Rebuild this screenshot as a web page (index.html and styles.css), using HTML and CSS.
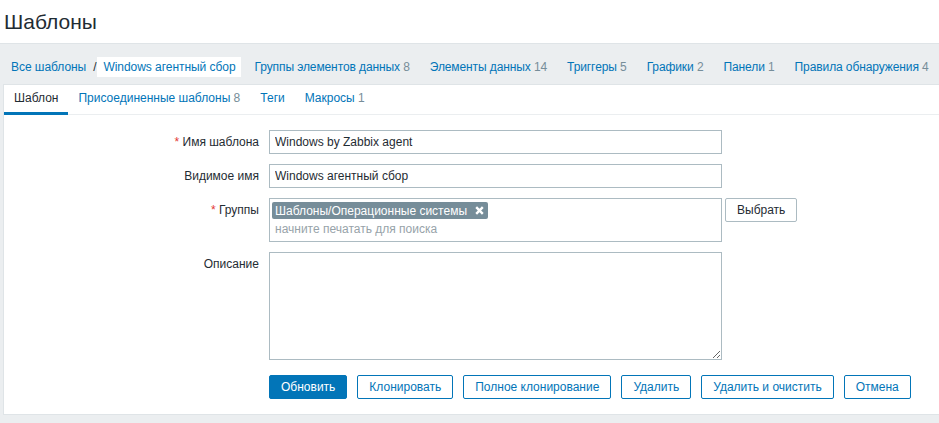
FILE: index.html
```html
<!DOCTYPE html>
<html lang="ru">
<head>
<meta charset="utf-8">
<title>Шаблоны</title>
<link rel="stylesheet" href="styles.css">
</head>
<body>
<header class="page-header">
  <h1>Шаблоны</h1>
</header>
<nav class="object-nav">
  <ul class="breadcrumbs">
    <li><a href="#">Все шаблоны</a></li>
    <li class="sep">/</li>
    <li class="current"><a href="#">Windows агентный сбор</a></li>
  </ul>
  <a class="nav-link" href="#">Группы элементов данных <span class="count">8</span></a>
  <a class="nav-link" href="#">Элементы данных <span class="count">14</span></a>
  <a class="nav-link" href="#">Триггеры <span class="count">5</span></a>
  <a class="nav-link" href="#">Графики <span class="count">2</span></a>
  <a class="nav-link" href="#">Панели <span class="count">1</span></a>
  <a class="nav-link" href="#">Правила обнаружения <span class="count">4</span></a>
</nav>
<main class="panel">
  <ul class="tabs">
    <li class="tab active">Шаблон</li>
    <li class="tab">Присоединенные шаблоны <span class="count">8</span></li>
    <li class="tab">Теги</li>
    <li class="tab">Макросы <span class="count">1</span></li>
  </ul>
  <form class="form">
    <label class="label"><span class="req">*</span> Имя шаблона</label>
    <div class="field"><input class="input" type="text" value="Windows by Zabbix agent"></div>

    <label class="label">Видимое имя</label>
    <div class="field"><input class="input" type="text" value="Windows агентный сбор"></div>

    <label class="label"><span class="req">*</span> Группы</label>
    <div class="field field-row">
      <div class="multiselect">
        <div class="chip">
          <span>Шаблоны/Операционные системы</span>
          <svg class="chip-x" width="9" height="9" viewBox="0 0 9 9"><path d="M1.2 1.2 L7.8 7.8 M7.8 1.2 L1.2 7.8" stroke="#fff" stroke-width="2.4" stroke-linecap="butt"/></svg>
        </div>
        <div class="placeholder">начните печатать для поиска</div>
      </div>
      <button type="button" class="btn btn-grey">Выбрать</button>
    </div>

    <label class="label">Описание</label>
    <div class="field"><textarea class="textarea"></textarea></div>

    <div class="spacer"></div>
    <div class="buttons">
      <button type="button" class="btn btn-primary">Обновить</button>
      <button type="button" class="btn btn-alt">Клонировать</button>
      <button type="button" class="btn btn-alt">Полное клонирование</button>
      <button type="button" class="btn btn-alt">Удалить</button>
      <button type="button" class="btn btn-alt">Удалить и очистить</button>
      <button type="button" class="btn btn-alt">Отмена</button>
    </div>
  </form>
</main>
</body>
</html>
```
FILE: styles.css
```css
* { box-sizing: border-box; }

html, body {
  margin: 0;
  padding: 0;
}

body {
  background: #ebeef0;
  font-family: "Liberation Sans", Arial, sans-serif;
  font-size: 12px;
  color: #1f2c33;
  overflow: hidden;
  width: 939px;
  height: 423px;
}

a { color: #0275b8; text-decoration: none; }

.page-header {
  background: #fff;
  height: 44px;
  border-bottom: 1px solid #dfe4e7;
  padding-left: 4px;
}

.page-header h1 {
  margin: 0;
  font-size: 21px;
  font-weight: normal;
  line-height: 43px;
  color: #1f2c33;
}

.object-nav {
  display: flex;
  align-items: center;
  height: 40px;
  padding: 6px 0 0 11px;
  white-space: nowrap;
}

.breadcrumbs {
  display: flex;
  align-items: center;
  list-style: none;
  margin: 0 4px 0 0;
  padding: 0;
  letter-spacing: -0.05px;
}

.breadcrumbs .sep {
  margin: 0 1px 0 7px;
  color: #1f2c33;
}

.breadcrumbs .current a {
  display: block;
  background: #fff;
  line-height: 20px;
  padding: 0 5px 0 6px;
}

.nav-link {
  margin: 0 10px;
  line-height: 20px;
  letter-spacing: -0.1px;
}

.count { color: #768d99; }

.panel {
  margin-left: 3px;
  background: #fff;
  border: 1px solid #dfe4e7;
  border-right: none;
  height: 331px;
}

.tabs {
  display: flex;
  list-style: none;
  margin: 0;
  padding: 0;
  border-bottom: 1px solid #ebeef0;
}

.tab {
  padding: 0 10px;
  line-height: 27px;
  border-bottom: 3px solid transparent;
  margin-bottom: -1px;
  color: #0275b8;
}

.tab.active {
  color: #1f2c33;
  border-bottom-color: #0275b8;
}

.form {
  display: grid;
  grid-template-columns: 255px 1fr;
  column-gap: 10px;
  row-gap: 10px;
  padding-top: 15px;
  align-items: start;
}

.label {
  text-align: right;
  line-height: 24px;
  color: #1f2c33;
}

.req { color: #e33734; }

.input {
  display: block;
  width: 453px;
  height: 24px;
  border: 1px solid #acbbc2;
  padding: 0 5px;
  font: inherit;
  color: #1f2c33;
  background: #fff;
  outline: none;
}

.field-row {
  display: flex;
  align-items: flex-start;
  gap: 3px;
}

.multiselect {
  width: 453px;
  height: 44px;
  border: 1px solid #acbbc2;
  padding: 3px 2px 0;
}

.chip {
  display: inline-flex;
  align-items: center;
  gap: 8px;
  background: #768d99;
  color: #fff;
  height: 17px;
  padding: 0 4px 0 3px;
  border-radius: 2px;
}

.chip-x { display: block; }

.placeholder {
  color: #97a3a9;
  padding-left: 3px;
  line-height: 21px;
}

.textarea {
  display: block;
  width: 453px;
  height: 108px;
  border: 1px solid #acbbc2;
  font: inherit;
  padding: 4px 5px;
  resize: both;
  outline: none;
}

.spacer { height: 0; }

.buttons {
  display: flex;
  gap: 10px;
  margin-top: 5px;
}

.btn {
  height: 24px;
  padding: 0 11px;
  font: inherit;
  border-radius: 2px;
  cursor: pointer;
  line-height: 22px;
}

.btn-primary {
  background: #0275b8;
  border: 1px solid #0275b8;
  color: #fff;
}

.btn-alt {
  background: #fff;
  border: 1px solid #0275b8;
  color: #0275b8;
}

.btn-grey {
  background: #fff;
  border: 1px solid #acbbc2;
  color: #1f2c33;
}
```
